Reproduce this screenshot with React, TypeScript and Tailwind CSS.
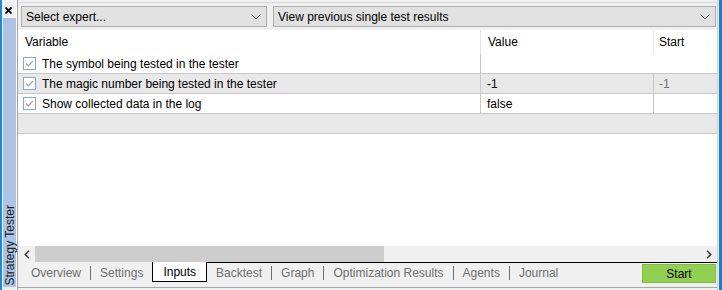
import React from "react";

const FONT = "font-['Liberation_Sans',Arial,sans-serif]";

const Chevron: React.FC = () => (
  <svg width="10" height="6" viewBox="0 0 10 6" className="text-[#606060]">
    <path d="M0.5 0.5 L5 5 L9.5 0.5" fill="none" stroke="currentColor" strokeWidth="1" />
  </svg>
);

const Combo: React.FC<{ label: string; className: string }> = ({ label, className }) => (
  <div
    className={`h-[21px] flex items-center justify-between border border-[#adadad] bg-[#e1e1e1] pl-[4px] pr-[5px] text-[12px] text-black ${className}`}
  >
    <span>{label}</span>
    <Chevron />
  </div>
);

const Check: React.FC = () => (
  <svg width="13" height="13" viewBox="0 0 13 13" className="shrink-0">
    <rect x="0.5" y="0.5" width="12" height="12" fill="white" stroke="#8ea6c4" />
    <path d="M3 6.5 L5.3 8.8 L10 4" fill="none" stroke="#a8a8a8" strokeWidth="1.3" />
  </svg>
);

const ROWS = [
  { name: "The symbol being tested in the tester", value: "", start: "", gray: false, span: true },
  { name: "The magic number being tested in the tester", value: "-1", start: "-1", gray: true, span: false },
  { name: "Show collected data in the log", value: "false", start: "", gray: false, span: false },
];

const TABS = [
  "Overview",
  "Settings",
  "Inputs",
  "Backtest",
  "Graph",
  "Optimization Results",
  "Agents",
  "Journal",
];

export default function App() {
  return (
    <div className={`w-[722px] h-[290px] flex bg-[#f0f0f0] overflow-hidden ${FONT}`}>
      {/* left window edge */}
      <div className="w-[2px] bg-[#1c8ad8]" />

      {/* side caption */}
      <div className="w-[14px] flex flex-col pb-[3px]">
        <div className="h-[18px] flex items-start justify-center pt-[7px] pr-[1px]">
          <svg width="7" height="7" viewBox="0 0 7 7">
            <path d="M0.5 0.5 L6.5 6.5 M6.5 0.5 L0.5 6.5" stroke="black" strokeWidth="1.8" />
          </svg>
        </div>
        <div className="flex-1 bg-[#aac4e2] ml-[1px] flex items-end justify-center pb-[2px]">
          <span className="[writing-mode:vertical-rl] rotate-180 text-[12px] text-[#1a1a1a] leading-none">
            Strategy Tester
          </span>
        </div>
      </div>

      <div className="w-[1px] bg-white" />

      {/* main */}
      <div className="flex-1 flex flex-col border-l border-[#a0a0a0] min-w-0">
        <div className="h-[3px] border-b border-[#d8d8d8]" />
        <div className="flex gap-[6px] pt-[3px] pl-[3px] pr-[1px] h-[27px]">
          <Combo label="Select expert..." className="w-[246px]" />
          <Combo label="View previous single test results" className="flex-1" />
        </div>

        {/* table */}
        <div className="h-[216px] bg-white flex flex-col text-[12px] text-black">
          <div className="h-[24px] flex items-center">
            <div className="w-[462px] pl-[7px]">Variable</div>
            <div className="w-[173px] h-full flex items-center pl-[7px] border-l border-[#e4e4e4]">Value</div>
            <div className="flex-1 h-full flex items-center pl-[5px] border-l border-[#ececec]">Start</div>
          </div>
          {ROWS.map((r) => (
            <div
              key={r.name}
              className={`h-[20px] flex items-center border-b border-[#c8c8c8] ${r.gray ? "bg-[#e8e8e8]" : "bg-white"}`}
            >
              <div className="w-[462px] h-full flex items-center gap-[6px] pl-[5px]">
                <Check />
                <span>{r.name}</span>
              </div>
              <div className="w-[173px] h-full flex items-center pl-[6px] border-l border-[#c8c8c8]">{r.value}</div>
              <div className={`flex-1 h-full flex items-center pl-[5px] text-[#707070] ${r.span ? "" : "border-l border-[#c8c8c8]"}`}>
                {r.start}
              </div>
            </div>
          ))}
          <div className="h-[20px] bg-[#e8e8e8] border-b border-[#c8c8c8]" />
          <div className="flex-1" />
        </div>

        {/* horizontal scrollbar */}
        <div className="h-[16px] flex items-center bg-[#f0f0f0]">
          <div className="w-[17px] flex justify-center">
            <svg width="6" height="9" viewBox="0 0 6 9">
              <path d="M5 0.8 L1.3 4.5 L5 8.2" fill="none" stroke="#404040" strokeWidth="1.6" />
            </svg>
          </div>
          <div className="w-[349px] h-full bg-[#cdcdcd]" />
          <div className="flex-1" />
          <div className="w-[17px] flex justify-center">
            <svg width="6" height="9" viewBox="0 0 6 9">
              <path d="M1 0.8 L4.7 4.5 L1 8.2" fill="none" stroke="#404040" strokeWidth="1.6" />
            </svg>
          </div>
        </div>

        {/* tabs */}
        <div className="h-[25px] flex items-start text-[12px]">
          <div className="flex items-start pl-[4px]">
            {TABS.map((t, i) => {
              const active = t === "Inputs";
              const nextActive = TABS[i + 1] === "Inputs";
              const last = i === TABS.length - 1;
              if (active) {
                return (
                  <div
                    key={t}
                    className="h-[20px] px-[10px] flex items-center bg-white border-x border-b border-black text-black"
                  >
                    {t}
                  </div>
                );
              }
              return (
                <div key={t} className={`flex items-start ${i > 2 ? "border-t border-black" : "border-t border-transparent"}`}>
                  <div className="h-[19px] px-[9px] flex items-center text-[#6e6e6e]">{t}</div>
                  {!last && !nextActive && (
                    <div className="w-[1px] h-[14px] mt-[3px] bg-[#6e6e6e]" />
                  )}
                </div>
              );
            })}
          </div>
          <div className="flex-1 self-stretch border-t border-black flex justify-end pt-[1px] pr-[1px]">
            <div className="w-[74px] h-[19px] bg-[#92d050] border border-[#7cbd45] flex items-center justify-center text-black text-[12px]">
              Start
            </div>
          </div>
        </div>
        <div className="h-[3px] border-t border-[#a8a8a8]" />
      </div>

      {/* right window edge */}
      <div className="w-[2px] bg-[#f0f0f0] border-l border-[#d0d0d0]" />
      <div className="w-[3px] bg-[#1c7ccc]" />
    </div>
  );
}
